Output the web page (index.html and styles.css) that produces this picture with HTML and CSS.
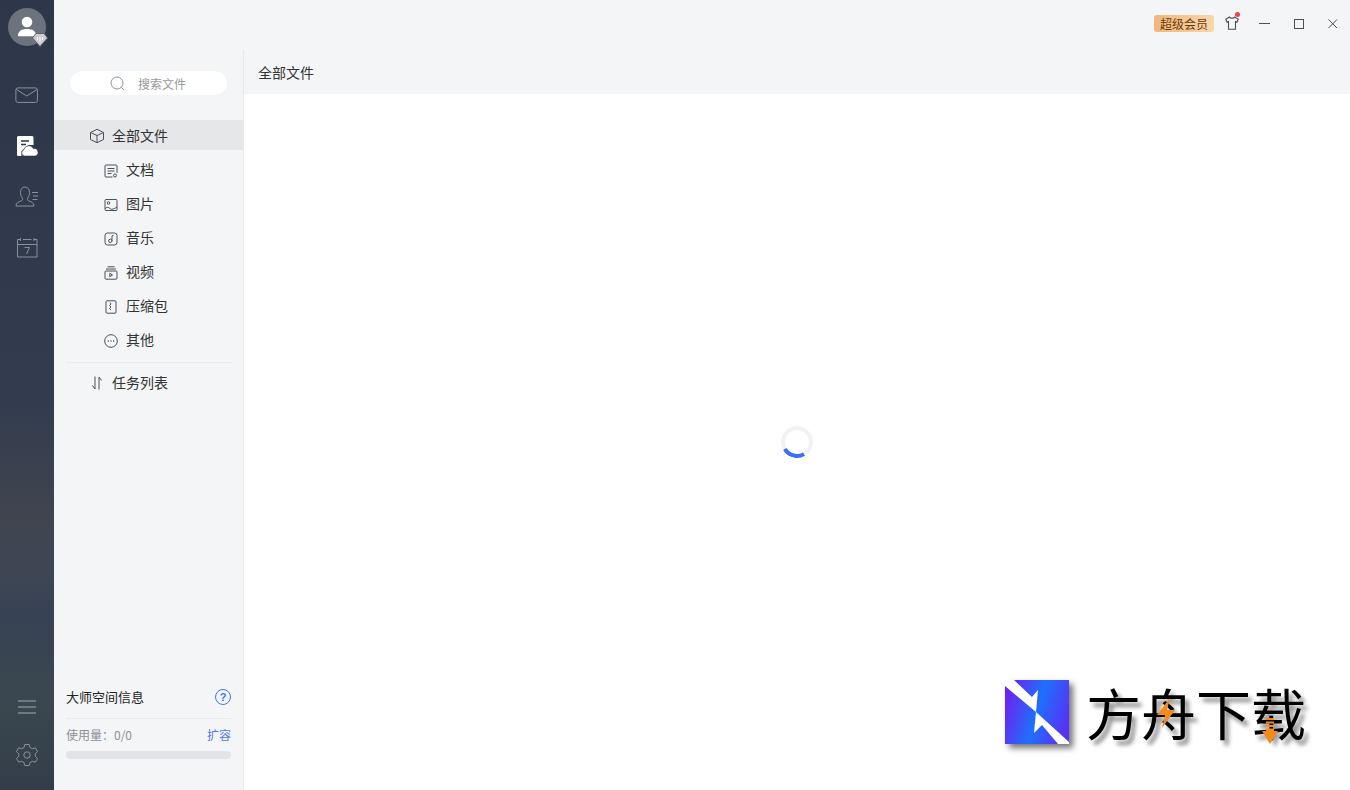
FILE: index.html
```html
<!DOCTYPE html>
<html lang="zh-CN">
<head>
    <meta charset="UTF-8">
    <title>全部文件</title>
    <link rel="stylesheet" href="styles.css">
</head>
<body>
<div class="app">
    <nav class="rail">
        <div class="avatar">
            <svg width="38" height="38" viewBox="0 0 38 38"><circle cx="19" cy="19" r="19" fill="#6c727e"/><circle cx="19" cy="14" r="5.3" fill="#fff"/><path d="M10 27.5c0-4.500 4-6.500 9-6.500s9 2 9 6.500c0 .5-.5 .8-1 .8H11c-.5 0-1-.3-1-.8z" fill="#fff"/></svg>
            <svg class="avatar-badge" width="16" height="14" viewBox="0 0 16 14"><path d="M4 .5h8L15.500 5 8 13.500.5 5z" fill="#c9cbd0" stroke="#5d636e"/><path d="M5.500 4v3M8 4v5M10.500 4v3" stroke="#fff" stroke-width="1"/></svg>
        </div>
        <a class="rail-btn mail">
            <svg width="24" height="17" viewBox="0 0 24 17" fill="none" stroke="#8b919c" stroke-width="1"><rect x=".9" y=".9" width="21.500" height="14.500" rx="2"/><path d="M1.500 2.500 11.700 9 22 2.500"/></svg>
        </a>
        <a class="rail-btn">
            <svg width="22" height="22" viewBox="0 0 22 22"><path d="M2.500 1h13.500a1.500 1.500 0 0 1 1.500 1.500V10h-5l-7 6v5H2.500A1.500 1.500 0 0 1 1 19.500v-17A1.500 1.500 0 0 1 2.500 1z" fill="#fff"/><path d="M5 6h8M5 9.500h5" stroke="#2e3849" stroke-width="1.300"/><path d="M8.500 21a3.200 3.200 0 0 1-.6-6.200 5 5 0 0 1 9.500-1 3.700 3.700 0 0 1 1.800 7.200z" fill="#fff" stroke="#2e3849" stroke-width=".6"/></svg>
        </a>
        <a class="rail-btn people">
            <svg width="24" height="21" viewBox="0 0 24 21" fill="none" stroke="#8b919c" stroke-width="1"><path d="M1 20c0-3.500 2.500-4 5-5 1.800-.7 2-2 1.300-3C6 10.500 5.500 8.500 5.500 6.500 5.500 3 7.300 1 10 1s4.500 2 4.500 5.500c0 2-.5 4-1.800 5.500-.7 1-.5 2.300 1.300 3 2.500 1 5 1.500 5 5z"/><path d="M17 6.500h6M18 10h5M17.500 13.500h5"/></svg>
        </a>
        <a class="rail-btn">
            <svg width="22" height="20" viewBox="0 0 22 20" fill="none" stroke="#8b919c" stroke-width="1"><path d="M4.500 1.500H1.500v17.500h19.500V1.500h-3M7 1.500h8.500M1.500 6.500h19.500"/><path d="M4.500 0v3M18 0v3" /><path d="M8.500 9.500h5l-3 6.500" /></svg>
        </a>
        <a class="rail-btn menu">
            <svg width="18" height="14" viewBox="0 0 18 14" stroke="#a4a9b1" stroke-width="1"><path d="M0 1h18M0 7h18M0 13h18"/></svg>
        </a>
        <a class="rail-btn gear">
            <svg width="24" height="24" viewBox="0 0 24 24" fill="none" stroke="#8b919c" stroke-width="1"><circle cx="12" cy="12" r="3.200"/><path d="M9.800 1.500h4.400l.8 3 2.300 1.200 3-.9 2.200 3.700-2.200 2.200v2.600l2.200 2.200-2.200 3.700-3-.9-2.300 1.200-.8 3H9.800l-.8-3-2.300-1.200-3 .9-2.200-3.700 2.200-2.200v-2.600L1.500 8.500l2.200-3.700 3 .9L9 4.500z"/></svg>
        </a>
    </nav>

    <div class="main">
        <header class="titlebar">
            <span class="vip">超级会员</span>
            <span class="skin">
                <svg width="14" height="14" viewBox="0 0 14 14" fill="none" stroke="#4a5058" stroke-width="1.100"><path d="M4.500 1 .7 3.200l1.300 2.800 1.500-.5v7.800h7v-7.800l1.500.5 1.300-2.800L9.500 1c-.5 1.600-4.500 1.600-5 0z"/></svg>
                <i class="dot"></i>
            </span>
            <a class="win-btn"><svg width="11" height="11" viewBox="0 0 11 11" stroke="#4a5058"><path d="M0 5.500h11"/></svg></a>
            <a class="win-btn"><svg width="11" height="11" viewBox="0 0 11 11" fill="none" stroke="#4a5058"><rect x="1.500" y="1.500" width="9" height="9"/></svg></a>
            <a class="win-btn"><svg width="11" height="11" viewBox="0 0 11 11" stroke="#4a5058"><path d="M1.500 1.500l8.500 8.500M10 1.500 1.500 10"/></svg></a>
        </header>

        <div class="body">
            <aside class="side">
                <div class="search">
                    <svg width="15" height="15" viewBox="0 0 15 15" fill="none" stroke="#8f939a"><circle cx="7" cy="7" r="6"/><path d="M11.500 11.500 14 14"/></svg>
                    <span>搜索文件</span>
                </div>
                <ul class="tree">
                    <li class="tree-item active">
                        <svg width="16" height="16" viewBox="0 0 16 16" fill="none" stroke="#4a5058"><path d="M8 1.300 14.500 4.500v7L8 14.700 1.500 11.500v-7zM1.500 4.500 8 7.500l6.500-3M8 7.500v7"/></svg>
                        全部文件
                    </li>
                    <li class="tree-item sub">
                        <svg width="14" height="14" viewBox="0 0 14 14" fill="none" stroke="#4a5058"><path d="M8.500 13H2a1 1 0 0 1-1-1V2a1 1 0 0 1 1-1h10a1 1 0 0 1 1 1v7"/><path d="M3.500 4.500h7M3.500 7h7M3.500 9.500h4"/><circle cx="11" cy="11.500" r="1.500"/></svg>
                        文档
                    </li>
                    <li class="tree-item sub">
                        <svg width="14" height="14" viewBox="0 0 14 14" fill="none" stroke="#4a5058"><rect x="1" y="1.500" width="12" height="11" rx="1"/><circle cx="4.500" cy="5" r="1.300"/><path d="M1 10.500c2-1.500 3.500-1.500 5 0s4 .5 7-1.500"/></svg>
                        图片
                    </li>
                    <li class="tree-item sub">
                        <svg width="14" height="14" viewBox="0 0 14 14" fill="none" stroke="#4a5058"><rect x="1" y="1" width="12" height="12" rx="2.500"/><circle cx="6.300" cy="8.800" r="1.700"/><path d="M8 8.800V3.800l1.500-.5"/></svg>
                        音乐
                    </li>
                    <li class="tree-item sub">
                        <svg width="14" height="14" viewBox="0 0 14 14" fill="none" stroke="#4a5058"><path d="M3.500 .8h7M2 3h10"/><rect x="1" y="5" width="12" height="8.200" rx="1"/><path d="M5.800 7.300 8.500 9 5.800 10.700z"/></svg>
                        视频
                    </li>
                    <li class="tree-item sub">
                        <svg width="14" height="14" viewBox="0 0 14 14" fill="none" stroke="#4a5058"><rect x="2" y=".8" width="10" height="12.400" rx="1"/><path d="M6 2.500 7 4 5.500 5.500 7 7 5.500 8.500 7 10"/></svg>
                        压缩包
                    </li>
                    <li class="tree-item sub">
                        <svg width="14" height="14" viewBox="0 0 14 14" fill="none" stroke="#4a5058"><circle cx="7" cy="7" r="6.300"/><path d="M3.800 7h1M6.500 7h1M9.200 7h1" stroke-width="1.300"/></svg>
                        其他
                    </li>
                </ul>
                <div class="side-line"></div>
                <div class="tree-item task">
                    <svg width="16" height="16" viewBox="0 0 16 16" fill="none" stroke="#4a5058"><path d="M6 1.500V14L3.500 10.500M10 14.500V2l2.500 3.500"/></svg>
                    任务列表
                </div>
                <div class="space">
                    <div class="space-head">
                        <span>大师空间信息</span>
                        <i class="help">?</i>
                    </div>
                    <div class="space-use">
                        <span>使用量：0/0</span>
                        <a>扩容</a>
                    </div>
                    <div class="space-bar"></div>
                </div>
            </aside>
            <section class="content">
                <div class="crumb">全部文件</div>
                <div class="list">
                    <div class="spinner"></div>
                </div>
            </section>
        </div>
    </div>

    <div class="mark">
        <svg width="64" height="64" viewBox="0 0 64 64">
            <defs><linearGradient id="markBg" x1="0" y1=".35" x2="1" y2=".65"><stop offset="0" stop-color="#6b24f4"/><stop offset=".5" stop-color="#1f70fb"/><stop offset="1" stop-color="#5a2ff6"/></linearGradient></defs>
            <rect width="64" height="64" fill="url(#markBg)"/>
            <path d="M0 0H9L27 17 33 10 31 32 64 62V64H53L37 45 29 53 31 32 0 6z" fill="#fff"/>
        </svg>
        <span class="mark-text">方舟下载</span>
        <svg class="mark-bolt" width="18" height="30" viewBox="0 0 18 30"><path d="M13 0 0 17H8L5 30 18 12H10z" fill="#f28a1c"/></svg>
        <svg class="mark-arrow" width="16" height="26" viewBox="0 0 16 26"><path d="M4 0h8v2H4zM4 3.500h8v2H4zM4 7h8v2H4zM4 10.500h8V13h4L8 26 0 13h4z" fill="#f28a1c"/></svg>
    </div>
</div>
</body>
</html>
```
FILE: styles.css
```css
html, body {
    margin: 0;
    height: 100%;
    overflow: hidden;
}
body {
    font-family: "Noto Sans CJK SC", "Liberation Sans", sans-serif;
    font-size: 14px;
    color: #333;
}
ul {
    margin: 0;
    padding: 0;
    list-style: none;
}
svg {
    display: block;
    flex: none;
}

.app {
    position: relative;
    display: flex;
    height: 790px;
    background: #f4f5f7;
}

/* left rail */
.rail {
    width: 54px;
    flex: none;
    display: flex;
    flex-direction: column;
    align-items: center;
    padding-top: 8px;
    box-sizing: border-box;
    background: linear-gradient(#2d3749 0, #323c4e 51%, #40444f 65%, #3e4654 72%, #374254 78%, #3b474f 89%, #323d49 100%);
}
.avatar {
    position: relative;
    width: 38px;
    height: 38px;
}
.avatar-badge {
    position: absolute;
    right: -2px;
    bottom: -1px;
}
.rail-btn {
    display: flex;
    justify-content: center;
    height: 24px;
    align-items: center;
}
.rail-btn.mail { margin-top: 37px; }
.rail-btn + .rail-btn { margin-top: 27px; }
.rail-btn.people svg { margin-bottom: 2px; }
.rail-btn.menu { margin-top: auto; }
.rail-btn.gear { margin-top: 24px; margin-bottom: 23px; }

/* title bar */
.main {
    flex: 1;
    display: flex;
    flex-direction: column;
    min-width: 0;
}
.titlebar {
    height: 50px;
    flex: none;
    display: flex;
    align-items: center;
    justify-content: flex-end;
    padding: 0 12px 4px 0;
    box-sizing: border-box;
}
.vip {
    width: 60px;
    height: 17px;
    line-height: 17px;
    text-align: center;
    font-size: 12px;
    color: #6d3a05;
    border-radius: 3px;
    background: linear-gradient(90deg, #eeb77e, #f8d7ae);
    margin-right: 11px;
}
.skin {
    position: relative;
    margin-right: 20px;
}
.dot {
    position: absolute;
    top: -4px;
    right: -1px;
    width: 5px;
    height: 5px;
    border-radius: 50%;
    background: #f0404a;
}
.win-btn {
    width: 11px;
    height: 11px;
    margin-left: 23px;
}
.skin + .win-btn { margin-left: 0; }

/* sidebar */
.body {
    flex: 1;
    display: flex;
    min-height: 0;
}
.side {
    width: 190px;
    flex: none;
    display: flex;
    flex-direction: column;
    box-sizing: border-box;
    border-right: 1px solid #e6e8eb;
}
.search {
    margin: 21px 16px 0;
    height: 24px;
    border-radius: 12px;
    background: #fff;
    display: flex;
    align-items: center;
    font-size: 12px;
    color: #999;
    padding-left: 40px;
    gap: 13px;
    box-shadow: 0 0 1px #e9eaee;
}
.tree { margin-top: 25px; }
.tree-item {
    display: flex;
    align-items: center;
    height: 34px;
    padding-left: 50px;
    gap: 8px;
    color: #333;
}
.tree-item.sub svg { margin-top: 4px; }
.tree-item.active {
    height: 30px;
    padding-left: 35px;
    gap: 7px;
    background: #e6e7e9;
    margin-bottom: 2px;
}
.tree-item.active svg { margin-top: 2px; }
.tree-item.task {
    height: 30px;
    padding-left: 35px;
    gap: 7px;
    margin-top: 4px;
}
.tree-item.task svg { margin-top: 2px; }
.side-line {
    height: 1px;
    margin: 6px 11px 0 12px;
    background: #e8eaed;
}

/* storage info */
.space {
    margin: auto 12px 31px;
}
.space-head {
    display: flex;
    justify-content: space-between;
    align-items: center;
    height: 22px;
    font-size: 13px;
    color: #222;
    padding-bottom: 11px;
    border-bottom: 1px solid #e8eaed;
}
.help {
    width: 14px;
    height: 14px;
    margin-top: 2px;
    border: 1.500px solid #3d74f6;
    border-radius: 50%;
    text-align: center;
    font: bold 11px/14px "Liberation Sans", sans-serif;
    color: #3d74f6;
}
.space-use {
    display: flex;
    justify-content: space-between;
    align-items: center;
    height: 17px;
    margin-top: 7px;
    font-size: 12px;
    color: #8c9096;
}
.space-use a { color: #4f79f0; }
.space-bar {
    height: 8px;
    margin-top: 8px;
    border-radius: 4px;
    background: #e2e4ea;
}

/* file list */
.content {
    flex: 1;
    display: flex;
    flex-direction: column;
    min-width: 0;
}
.crumb {
    height: 44px;
    line-height: 44px;
    padding-left: 14px;
    font-size: 14px;
    color: #333;
}
.list {
    flex: 1;
    background: #fff;
    display: flex;
    justify-content: center;
    padding-top: 332px;
}
.spinner {
    width: 24px;
    height: 24px;
    border-radius: 50%;
    border: 4px solid #f1f2f4;
    position: relative;
}
.spinner::after {
    content: "";
    position: absolute;
    inset: -4px;
    border-radius: 50%;
    border: 4px solid transparent;
    border-bottom-color: #3b6ff5;
    transform: rotate(15deg);
}

/* watermark */
.mark {
    position: absolute;
    left: 1005px;
    top: 679px;
    display: flex;
    align-items: center;
    gap: 17px;
}
.mark > svg:first-child {
    filter: drop-shadow(4px 4px 3px rgba(0, 0, 0, .55));
}
.mark-text {
    font-size: 55px;
    line-height: 65px;
    color: #000;
    font-weight: 400;
    text-shadow: 4px 5px 4px rgba(0, 0, 0, .45);
}
.mark-bolt {
    position: absolute;
    left: 152px;
    top: 19px;
}
.mark-arrow {
    position: absolute;
    left: 257px;
    top: 39px;
}
```
